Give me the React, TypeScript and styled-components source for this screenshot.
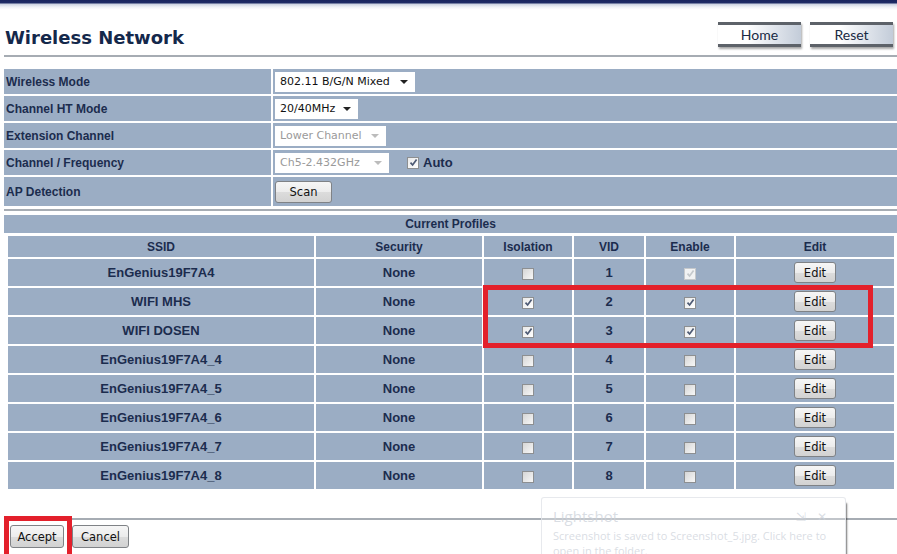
import styled, { createGlobalStyle } from "styled-components";

const navy = "#1b2c4e";
const rowBg = "#9badc4";

const GlobalStyle = createGlobalStyle`
  html, body {
    margin: 0;
    padding: 0;
    background: #ffffff;
  }
  body {
    font-family: "Liberation Sans", Arial, sans-serif;
    color: ${navy};
  }
`;

const settings = [
  { label: "Wireless Mode", kind: "mode" },
  { label: "Channel HT Mode", kind: "ht" },
  { label: "Extension Channel", kind: "ext" },
  { label: "Channel / Frequency", kind: "freq" },
  { label: "AP Detection", kind: "scan" },
];

const profiles = [
  { ssid: "EnGenius19F7A4", iso: false, vid: 1, enable: "disabled" },
  { ssid: "WIFI MHS", iso: true, vid: 2, enable: "on" },
  { ssid: "WIFI DOSEN", iso: true, vid: 3, enable: "on" },
  { ssid: "EnGenius19F7A4_4", iso: false, vid: 4, enable: "off" },
  { ssid: "EnGenius19F7A4_5", iso: false, vid: 5, enable: "off" },
  { ssid: "EnGenius19F7A4_6", iso: false, vid: 6, enable: "off" },
  { ssid: "EnGenius19F7A4_7", iso: false, vid: 7, enable: "off" },
  { ssid: "EnGenius19F7A4_8", iso: false, vid: 8, enable: "off" },
];

const columns = [
  { title: "SSID", width: 306 },
  { title: "Security", width: 166 },
  { title: "Isolation", width: 88 },
  { title: "VID", width: 70 },
  { title: "Enable", width: 88 },
  { title: "Edit", width: 158 },
];

const Check = ({ state }: { state: "on" | "off" | "disabled" }) => (
  <CheckBox $state={state}>
    {state !== "off" && (
      <svg width="9" height="9" viewBox="0 0 9 9">
        <path
          d="M1.5 4.6 L3.6 7 L7.6 1.4"
          fill="none"
          stroke={state === "disabled" ? "#c4c8cc" : "#4d5a74"}
          strokeWidth="1.7"
        />
      </svg>
    )}
  </CheckBox>
);

const Select = ({ text, width, disabled }: { text: string; width: number; disabled?: boolean }) => (
  <SelectBox $width={width} $disabled={disabled}>
    <span>{text}</span>
    <Arrow $disabled={disabled} />
  </SelectBox>
);

const renderValue = (kind: string) => {
  switch (kind) {
    case "mode":
      return <Select text="802.11 B/G/N Mixed" width={140} />;
    case "ht":
      return <Select text="20/40MHz" width={83} />;
    case "ext":
      return <Select text="Lower Channel" width={111} disabled />;
    case "freq":
      return (
        <>
          <Select text="Ch5-2.432GHz" width={114} disabled />
          <AutoLabel>
            <Check state="on" />
            Auto
          </AutoLabel>
        </>
      );
    default:
      return <GrayButton $w={57} $h={22}>Scan</GrayButton>;
  }
};

const App = () => {
  return (
    <Page>
      <GlobalStyle />
      <TopBar />
      <Header>
        <Title>Wireless Network</Title>
        <NavButtons>
          <NavButton>Home</NavButton>
          <NavButton>Reset</NavButton>
        </NavButtons>
      </Header>
      <Rule />

      <Settings>
        {settings.map((s, i) => (
          <SettingRow key={s.label} $tall={i === settings.length - 1}>
            <LabelCell>{s.label}</LabelCell>
            <ValueCell>{renderValue(s.kind)}</ValueCell>
          </SettingRow>
        ))}
      </Settings>
      <Rule $top={3} />

      <ProfilesBar>Current Profiles</ProfilesBar>
      <Profiles>
        <colgroup>
          {columns.map((c) => (
            <col key={c.title} style={{ width: c.width }} />
          ))}
        </colgroup>
        <thead>
          <tr>
            {columns.map((c) => (
              <HeadCell key={c.title}>{c.title}</HeadCell>
            ))}
          </tr>
        </thead>
        <tbody>
          {profiles.map((p) => (
            <tr key={p.ssid}>
              <DataCell>{p.ssid}</DataCell>
              <DataCell>None</DataCell>
              <DataCell>
                <Check state={p.iso ? "on" : "off"} />
              </DataCell>
              <DataCell>{p.vid}</DataCell>
              <DataCell>
                <Check state={p.enable as "on" | "off" | "disabled"} />
              </DataCell>
              <DataCell>
                <GrayButton $w={42} $h={21}>Edit</GrayButton>
              </DataCell>
            </tr>
          ))}
        </tbody>
      </Profiles>

      <Rule $top={27} />
      <Actions>
        <GrayButton $w={54} $h={23}>Accept</GrayButton>
        <GrayButton $w={57} $h={23}>Cancel</GrayButton>
      </Actions>

      <Highlight $left={483} $top={285} $width={390} $height={63} />
      <Highlight $left={4} $top={516} $width={68} $height={48} />

      <Toast>
        <ToastHead>
          <ToastTitle>Lightshot</ToastTitle>
          <ToastIcons>⇲ ✕</ToastIcons>
        </ToastHead>
        <ToastText>
          Screenshot is saved to Screenshot_5.jpg. Click here to
          <br />
          open in the folder.
        </ToastText>
      </Toast>
    </Page>
  );
};

export default App;

const Page = styled.div`
  position: relative;
  width: 897px;
  height: 554px;
  overflow: hidden;
  background: #fff;
`;

const TopBar = styled.div`
  height: 10px;
  background: linear-gradient(
    #18245e 0,
    #1d2b66 3px,
    #c9d0e0 4px,
    #eef1f6 7px,
    #ffffff 10px
  );
`;

const Header = styled.div`
  display: flex;
  justify-content: space-between;
  align-items: flex-start;
  height: 45px;
  padding: 0 4px 0 5px;
`;

const Title = styled.h1`
  margin: 17px 0 0;
  font-family: "DejaVu Sans", Verdana, sans-serif;
  font-size: 18px;
  line-height: 22px;
  font-weight: bold;
  color: #14284b;
`;

const NavButtons = styled.div`
  display: flex;
  gap: 9px;
  margin-top: 12px;
`;

const NavButton = styled.div`
  box-sizing: border-box;
  width: 83px;
  height: 25px;
  display: flex;
  align-items: center;
  justify-content: center;
  border-top: 3px solid #5d6269;
  border-bottom: 3px solid #5d6269;
  background: linear-gradient(to right, #ffffff 35%, #c3ccd9 100%);
  box-shadow: 1px 2px 2px rgba(0, 0, 0, 0.35);
  font-family: Lato, "DejaVu Sans", sans-serif;
  font-size: 14px;
  color: #1a2a44;
`;

const Rule = styled.div<{ $top?: number }>`
  height: 2px;
  margin: ${(p) => p.$top ?? 0}px 0 0 4px;
  background: #a6acb3;
`;

const Settings = styled.div`
  display: flex;
  flex-direction: column;
  gap: 2px;
  margin: 12px 0 0 4px;
`;

const SettingRow = styled.div<{ $tall?: boolean }>`
  display: grid;
  grid-template-columns: 267px 1fr;
  column-gap: 2px;
  height: ${(p) => (p.$tall ? 29 : 25)}px;
`;

const LabelCell = styled.div`
  display: flex;
  align-items: center;
  padding-left: 2px;
  background: ${rowBg};
  font-size: 12px;
  font-weight: bold;
  color: ${navy};
`;

const ValueCell = styled.div`
  display: flex;
  align-items: center;
  gap: 18px;
  padding-left: 2px;
  background: ${rowBg};
`;

const SelectBox = styled.div<{ $width: number; $disabled?: boolean }>`
  box-sizing: border-box;
  width: ${(p) => p.$width}px;
  height: 20px;
  display: flex;
  align-items: center;
  justify-content: space-between;
  padding: 0 7px 0 5px;
  background: #fff;
  font-family: "DejaVu Sans", Tahoma, sans-serif;
  font-size: 11px;
  color: ${(p) => (p.$disabled ? "#9a9a9a" : "#111")};
`;

const Arrow = styled.span<{ $disabled?: boolean }>`
  width: 0;
  height: 0;
  border-left: 4px solid transparent;
  border-right: 4px solid transparent;
  border-top: 4px solid ${(p) => (p.$disabled ? "#bcbcbc" : "#222")};
`;

const AutoLabel = styled.label`
  display: flex;
  align-items: center;
  gap: 4px;
  font-size: 13px;
  font-weight: bold;
  color: ${navy};
`;

const CheckBox = styled.span<{ $state: "on" | "off" | "disabled" }>`
  box-sizing: border-box;
  width: 12px;
  height: 12px;
  display: inline-flex;
  align-items: center;
  justify-content: center;
  vertical-align: middle;
  border: 1px solid ${(p) => (p.$state === "disabled" ? "#c6c9cc" : "#8d8f91")};
  background: ${(p) =>
    p.$state === "off"
      ? "linear-gradient(135deg, #d6d6d6, #f7f7f7)"
      : p.$state === "disabled"
      ? "#f1f2f3"
      : "linear-gradient(135deg, #e9e9e9, #ffffff)"};
`;

const GrayButton = styled.button<{ $w: number; $h: number }>`
  box-sizing: border-box;
  width: ${(p) => p.$w}px;
  height: ${(p) => p.$h}px;
  padding: 0;
  border: 1px solid #7f8286;
  border-radius: 3px;
  background: linear-gradient(#f6f6f6 0%, #ececec 50%, #dcdcdc 51%, #d2d2d2 100%);
  font-family: "DejaVu Sans", Tahoma, sans-serif;
  font-size: 11.5px;
  color: #111;
  vertical-align: middle;
`;

const ProfilesBar = styled.div`
  height: 18px;
  margin: 4px 0 0 4px;
  display: flex;
  align-items: center;
  justify-content: center;
  background: ${rowBg};
  font-size: 12px;
  font-weight: bold;
  color: ${navy};
`;

const Profiles = styled.table`
  width: 890px;
  margin: 1px 0 0 6px;
  table-layout: fixed;
  border-collapse: separate;
  border-spacing: 2px;
`;

const HeadCell = styled.th`
  height: 21px;
  padding: 0;
  background: ${rowBg};
  font-size: 12px;
  font-weight: bold;
  color: ${navy};
  text-align: center;
  vertical-align: bottom;
  line-height: 19px;
`;

const DataCell = styled.td`
  height: 27px;
  padding: 0;
  background: ${rowBg};
  font-size: 13px;
  font-weight: bold;
  color: ${navy};
  text-align: center;
`;

const Actions = styled.div`
  display: flex;
  gap: 8px;
  margin: 5px 0 0 10px;
`;

const Highlight = styled.div<{ $left: number; $top: number; $width: number; $height: number }>`
  position: absolute;
  left: ${(p) => p.$left}px;
  top: ${(p) => p.$top}px;
  width: ${(p) => p.$width}px;
  height: ${(p) => p.$height}px;
  box-sizing: border-box;
  border: 5px solid #e3202b;
  pointer-events: none;
`;

const Toast = styled.div`
  position: absolute;
  left: 541px;
  top: 497px;
  width: 305px;
  height: 80px;
  box-sizing: border-box;
  padding: 8px 6px 8px 11px;
  border: 1px solid rgba(225, 228, 232, 0.8);
  border-radius: 3px;
  background: rgba(255, 255, 255, 0.3);
  box-shadow: 3px 4px 2px -2px rgba(0, 0, 0, 0.55);
  font-family: "Open Sans", "DejaVu Sans", sans-serif;
  color: rgba(205, 210, 218, 0.75);
`;

const ToastHead = styled.div`
  display: flex;
  justify-content: space-between;
  align-items: center;
  padding-right: 8px;
`;

const ToastTitle = styled.div`
  font-size: 15px;
  line-height: 20px;
`;

const ToastIcons = styled.div`
  font-size: 12px;
  letter-spacing: 4px;
`;

const ToastText = styled.div`
  margin-top: 2px;
  font-size: 11px;
  line-height: 15px;
  white-space: nowrap;
`;
